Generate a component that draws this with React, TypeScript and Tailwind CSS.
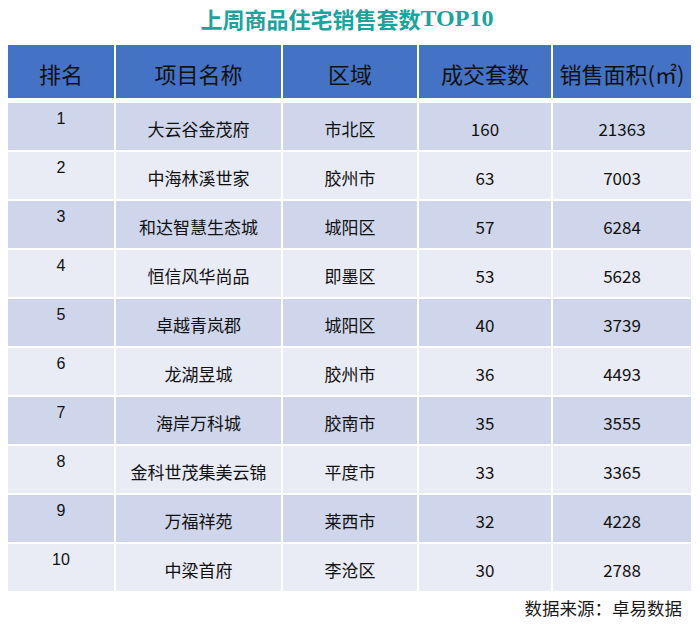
import React from "react"

const rows = [
  { rank: "1", name: "大云谷金茂府", area: "市北区", count: "160", size: "21363" },
  { rank: "2", name: "中海林溪世家", area: "胶州市", count: "63", size: "7003" },
  { rank: "3", name: "和达智慧生态城", area: "城阳区", count: "57", size: "6284" },
  { rank: "4", name: "恒信风华尚品", area: "即墨区", count: "53", size: "5628" },
  { rank: "5", name: "卓越青岚郡", area: "城阳区", count: "40", size: "3739" },
  { rank: "6", name: "龙湖昱城", area: "胶州市", count: "36", size: "4493" },
  { rank: "7", name: "海岸万科城", area: "胶南市", count: "35", size: "3555" },
  { rank: "8", name: "金科世茂集美云锦", area: "平度市", count: "33", size: "3365" },
  { rank: "9", name: "万福祥苑", area: "莱西市", count: "32", size: "4228" },
  { rank: "10", name: "中梁首府", area: "李沧区", count: "30", size: "2788" },
]

const headers = ["排名", "项目名称", "区域", "成交套数", "销售面积(㎡)"]

export default function App() {
  return (
    <div className="w-[700px] h-[624px] bg-white font-['Noto_Sans_CJK_SC',sans-serif] text-[#111]">
      <h1 className="h-[34px] pt-[2px] pr-[6px] flex justify-center items-center text-[22px] font-bold text-[#1ba39e] leading-none">
        上周商品住宅销售套数
        <span className="font-['Liberation_Serif','Noto_Sans_CJK_SC',serif] text-[24px]">TOP10</span>
      </h1>

      <div className="ml-[8px] mt-[11px] w-[683px] grid grid-cols-[106px_165px_134px_132px_138px] gap-x-[2px] gap-y-[2px] bg-white">
        {headers.map((h) => (
          <div
            key={h}
            className="h-[53px] bg-[#4472c4] flex items-center justify-center pt-[3px] text-[22px] leading-none whitespace-nowrap"
          >
            {h}
          </div>
        ))}
        <div className="col-span-5 h-[1px]" />
        {rows.map((r, i) => {
          const bg = i % 2 === 0 ? "bg-[#cfd5ea]" : "bg-[#e9ebf5]"
          return (
            <React.Fragment key={r.rank}>
              <div className={`h-[47px] ${bg} flex justify-center pt-[7px] font-['Liberation_Sans',sans-serif] text-[16px] leading-[18px]`}>
                {r.rank}
              </div>
              <div className={`h-[47px] ${bg} flex items-center justify-center pt-[4px] text-[17px] leading-none`}>
                {r.name}
              </div>
              <div className={`h-[47px] ${bg} flex items-center justify-center pt-[4px] text-[17px] leading-none`}>
                {r.area}
              </div>
              <div className={`h-[47px] ${bg} flex items-center justify-center pt-[4px] text-[17px] leading-none`}>
                {r.count}
              </div>
              <div className={`h-[47px] ${bg} flex items-center justify-center pt-[4px] text-[17px] leading-none`}>
                {r.size}
              </div>
            </React.Fragment>
          )
        })}
      </div>

      <div className="w-[682px] mt-[8px] text-right text-[17.5px] leading-none text-[#1a1a1a]">
        数据来源：卓易数据
      </div>
    </div>
  )
}
